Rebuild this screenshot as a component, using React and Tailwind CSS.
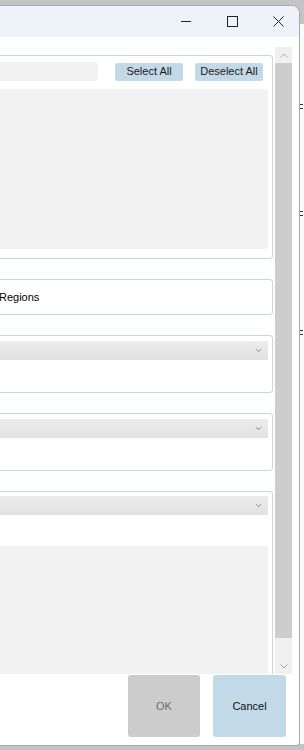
import { ChevronDown } from "lucide-react";

const panel = "-ml-3 mr-[2px] border border-[#c9d7dd] rounded-[3px] bg-white";

function Dropdown() {
  return (
    <div className="h-[19px] mr-[4px] -ml-3 bg-gradient-to-b from-[#ececec] to-[#e2e2e2] flex items-center justify-end pr-[5px]">
      <ChevronDown size={9} strokeWidth={1.75} className="text-[#555]" />
    </div>
  );
}

export default function App() {
  return (
    <div
      className="w-[304px] h-[750px] bg-[#c4c4c4] flex overflow-hidden"
      style={{ fontFamily: '"Liberation Sans", Arial, sans-serif' }}
    >
      <div className="w-[300px] mt-[5px] mb-[4px] bg-white border-t border-r border-b border-[#a8a8a8] rounded-tr-[8px] rounded-br-[4px] flex flex-col overflow-hidden">
        {/* title bar */}
        <div className="h-[31px] bg-[#eef3f9] flex items-center justify-end shrink-0">
          <svg width="11" height="11" viewBox="0 0 11 11" className="mr-[35px]">
            <line x1="0" y1="5.5" x2="10" y2="5.5" stroke="#222" strokeWidth="1" />
          </svg>
          <svg width="11" height="11" viewBox="0 0 11 11" className="mr-[35px]">
            <rect x="0.5" y="0.5" width="10" height="10" fill="none" stroke="#222" strokeWidth="1" />
          </svg>
          <svg width="11" height="11" viewBox="0 0 11 11" className="mr-[15px]">
            <path d="M0.5 0.5 L10.5 10.5 M10.5 0.5 L0.5 10.5" stroke="#222" strokeWidth="1" />
          </svg>
        </div>

        {/* scroll area */}
        <div className="mt-[10px] h-[627px] flex shrink-0">
          <div className="w-[275px] overflow-hidden flex flex-col gap-[20px] pt-[8px] text-[11px] text-black">
            <div className={`${panel} h-[204px] shrink-0 pt-[6px] flex flex-col`}>
              <div className="flex items-center pr-[9px]">
                <div className="flex-1 h-[19px] bg-[#f1f1f1] rounded-[3px]" />
                <button className="ml-[17px] w-[68px] h-[18px] bg-[#c4d9e7] rounded-[2px] text-[11px] text-[#1a1a1a]">
                  Select All
                </button>
                <button className="ml-[12px] w-[68px] h-[18px] bg-[#c4d9e7] rounded-[2px] text-[11px] text-[#1a1a1a]">
                  Deselect All
                </button>
              </div>
              <div className="mt-[8px] mr-[4px] h-[160px] bg-[#f2f2f2] rounded-[2px]" />
            </div>

            <div className={`${panel} h-[36px] shrink-0 flex items-center`}>
              <span className="ml-[10px] text-[11px]">Regions</span>
            </div>

            <div className={`${panel} h-[58px] shrink-0 pt-[5px]`}>
              <div className="ml-3">
                <Dropdown />
              </div>
            </div>

            <div className={`${panel} h-[58px] shrink-0 pt-[5px]`}>
              <div className="ml-3">
                <Dropdown />
              </div>
            </div>

            <div className={`${panel} h-[240px] shrink-0 pt-[4px]`}>
              <div className="ml-3">
                <Dropdown />
              </div>
              <div className="mt-[31px] mr-[4px] h-[200px] bg-[#f2f2f2] rounded-[2px]" />
            </div>
          </div>

          {/* scrollbar */}
          <div className="w-[17px] flex flex-col bg-[#cdcdcd]">
            <div className="h-[16px] bg-[#f0f0f0] flex items-center justify-center">
              <svg width="8" height="5" viewBox="0 0 8 5">
                <path d="M0.5 4.5 L4 1 L7.5 4.5" fill="none" stroke="#b0b0b0" strokeWidth="1" />
              </svg>
            </div>
            <div className="flex-1" />
            <div className="h-[36px] bg-[#f0f0f0] flex items-end justify-center pb-[5px]">
              <svg width="8" height="5" viewBox="0 0 8 5">
                <path d="M0.5 0.5 L4 4 L7.5 0.5" fill="none" stroke="#a0a0a0" strokeWidth="1" />
              </svg>
            </div>
          </div>
        </div>

        {/* footer */}
        <div className="flex justify-end items-start pt-[1px] pr-[13px] gap-[13px] text-[11px]">
          <button className="w-[72px] h-[62px] bg-[#cccccc] rounded-[3px] text-[#6d6d6d]">OK</button>
          <button className="w-[73px] h-[62px] bg-[#c2d9e8] rounded-[3px] text-[#111]">Cancel</button>
        </div>
      </div>

      {/* sliver of window behind */}
      <div className="w-[4px] mt-[24px] mb-[6px] bg-[#fafafa] flex flex-col">
        <div className="mt-[80px] h-[5px] border-y border-[#333] w-[3px]" />
        <div className="mt-[102px] h-[5px] border-y border-[#333] w-[3px]" />
        <div className="mt-[114px] h-[5px] border-y border-[#333] w-[3px]" />
      </div>
    </div>
  );
}
